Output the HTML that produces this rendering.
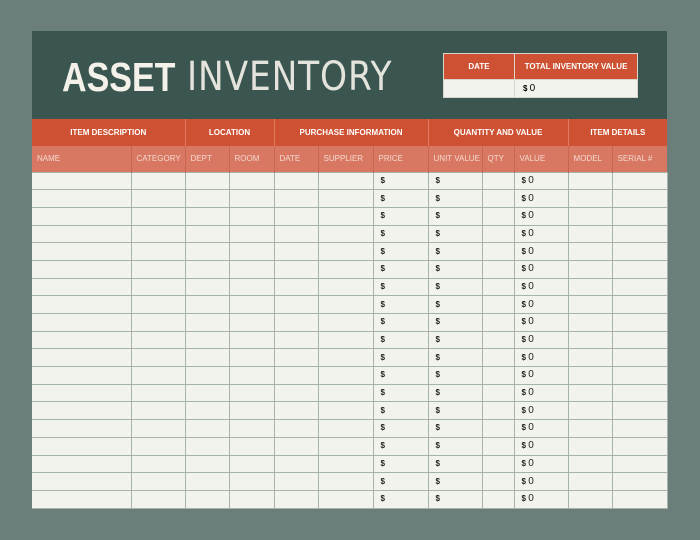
<!DOCTYPE html>
<html><head><meta charset="utf-8"><style>
*{margin:0;padding:0;box-sizing:border-box}
body{width:700px;height:540px;background:#6b7e79;position:relative;overflow:hidden;font-family:"Liberation Sans",sans-serif}
#hdr{position:absolute;left:32px;top:31px;width:635px;height:88px;background:#3b5650}
.t{position:absolute;top:56px;font-size:41px;line-height:42px;color:#f3f1ea;white-space:nowrap;transform-origin:0 0}
#t1{left:62px;font-weight:900;transform:scaleX(0.83)}
#t2{left:187px;font-weight:normal;color:#e4e3dc;letter-spacing:1px;font-family:"DejaVu Sans",sans-serif;font-size:40px;transform:scaleX(0.86)}
#dbox{position:absolute;left:443px;top:53px;border-collapse:collapse}
#dbox td{border:1px solid #d8d5cc}
table{border-collapse:collapse;table-layout:fixed}
#main{position:absolute;left:32px;top:119px;width:635px}
.g td{background:#cd5132;color:#fff;font-weight:bold;font-size:8px;text-align:center;height:27px;border-left:1px solid #e07a60}
.s td{background:#d87862;color:#f4d9cf;font-size:8px;height:26px;padding-left:5px;border-left:1px solid #c9664f;white-space:nowrap}
.r td{background:#f3f3ee;height:17.7px;border:1px solid #a5b2ad;font-size:8px;font-weight:bold;padding-left:7px;color:#222;line-height:10px;vertical-align:middle}
.r td:first-child{border-left:none}
.z span{font-weight:normal;font-size:10px}
</style></head><body>
<div id="hdr"></div>
<div class="t" id="t1">ASSET</div>
<div class="t" id="t2">INVENTORY</div>
<table id="dbox">
<tr style="height:26px"><td style="width:71px;background:#cd5132;color:#fff;font-weight:bold;font-size:8px;text-align:center">DATE</td><td style="width:123px;background:#cd5132;color:#fff;font-weight:bold;font-size:8px;text-align:center">TOTAL INVENTORY VALUE</td></tr>
<tr style="height:18px"><td style="background:#f3f3ee"></td><td style="background:#f3f3ee;font-size:8px;font-weight:bold;padding-left:8px">$ <span style="font-weight:normal;font-size:10px">0</span></td></tr>
</table>
<table id="main">
<colgroup><col style="width:99px"><col style="width:54px"><col style="width:44px"><col style="width:45px"><col style="width:44px"><col style="width:55px"><col style="width:55px"><col style="width:54px"><col style="width:32px"><col style="width:54px"><col style="width:44px"><col style="width:55px"></colgroup>
<tr class="g"><td colspan="2" style="border-left:none">ITEM DESCRIPTION</td><td colspan="2">LOCATION</td><td colspan="3">PURCHASE INFORMATION</td><td colspan="3">QUANTITY AND VALUE</td><td colspan="2">ITEM DETAILS</td></tr>
<tr class="s"><td style="border-left:none">NAME</td><td>CATEGORY</td><td>DEPT</td><td>ROOM</td><td>DATE</td><td>SUPPLIER</td><td>PRICE</td><td>UNIT VALUE</td><td>QTY</td><td>VALUE</td><td>MODEL</td><td>SERIAL #</td></tr>
<tbody id="rows"></tbody>
</table>
<script>
var h='';for(var i=0;i<19;i++){h+='<tr class="r"><td></td><td></td><td></td><td></td><td></td><td></td><td>$</td><td>$</td><td></td><td class="z">$ <span>0</span></td><td></td><td></td></tr>';}
document.getElementById('rows').innerHTML=h;
</script>
</body></html>
